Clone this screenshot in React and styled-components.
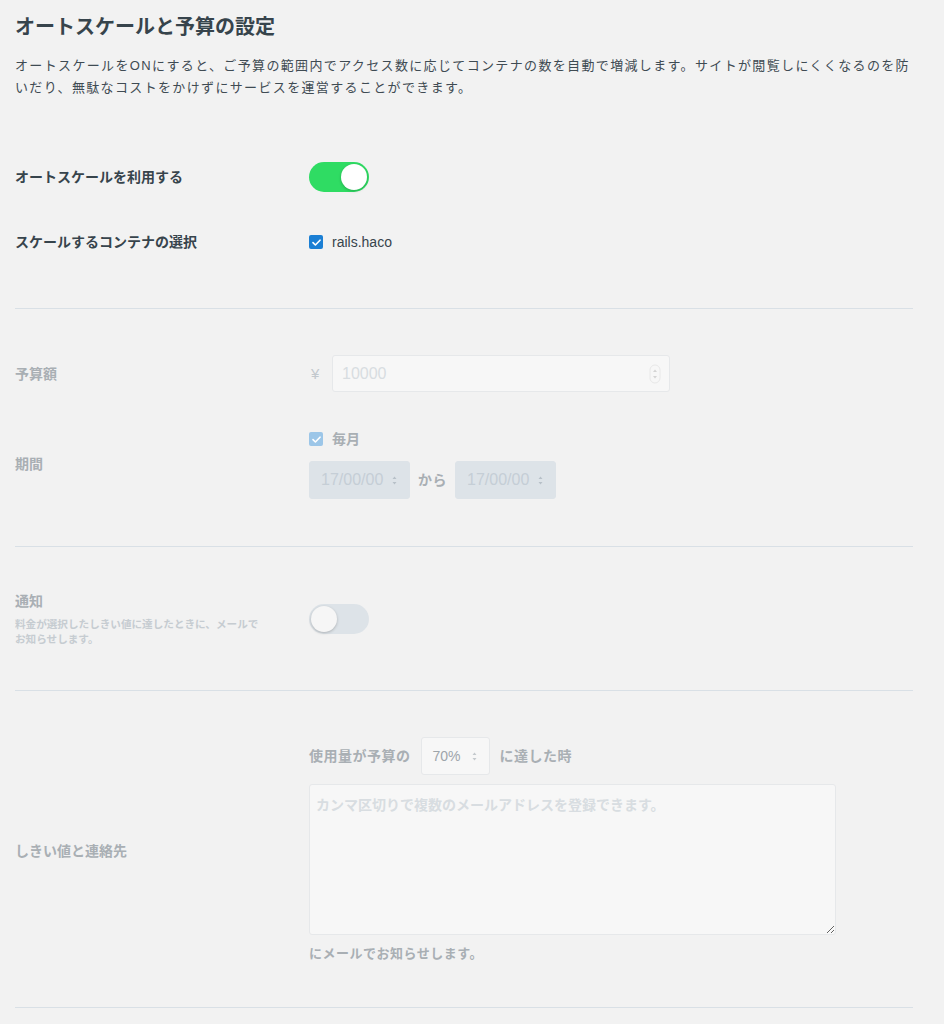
import React from "react";
import styled, { createGlobalStyle } from "styled-components";

const GlobalStyle = createGlobalStyle`
  html, body {
    margin: 0;
    padding: 0;
    background: #f2f2f2;
  }
  body {
    font-family: "Liberation Sans", "Noto Sans CJK JP", sans-serif;
    color: #37444c;
    -webkit-font-smoothing: antialiased;
  }
`;

const Page = styled.div`
  width: 898px;
  padding: 13px 31px 0 15px;
  background: #f2f2f2;
`;

const Title = styled.h1`
  margin: 0;
  font-size: 20px;
  line-height: 28px;
  font-weight: 700;
  color: #37444c;
`;

const Lead = styled.p`
  margin: 14px 0 0;
  font-size: 13px;
  line-height: 22px;
  letter-spacing: 1.35px;
  color: #3f4b53;
`;

const Section = styled.section`
  display: flex;
  flex-direction: column;
  gap: ${(p) => p.gap ?? 0}px;
  padding: ${(p) => p.top}px 0 ${(p) => p.bottom}px;
  border-bottom: 1px solid #d9e0e6;
`;

const Row = styled.div`
  display: grid;
  grid-template-columns: 294px 1fr;
  align-items: center;
`;

const Label = styled.div`
  font-size: 14px;
  line-height: 20px;
  font-weight: 600;
  color: ${(p) => (p.muted ? "#a9afb4" : "#37444c")};
`;

const Hint = styled.div`
  margin-top: 6px;
  max-width: 252px;
  font-size: 10.6px;
  line-height: 15px;
  font-weight: 600;
  color: #c6ccd1;
`;

const Control = styled.div`
  display: flex;
  flex-direction: column;
  align-items: flex-start;
  gap: ${(p) => p.gap ?? 0}px;
`;

const Inline = styled.div`
  display: flex;
  align-items: center;
  gap: ${(p) => p.gap ?? 8}px;
`;

const Track = styled.div`
  position: relative;
  width: 60px;
  height: 30px;
  border-radius: 15px;
  background: ${(p) => (p.on ? "#2fdc63" : "#dde3e8")};
`;

const Knob = styled.span`
  position: absolute;
  top: 2px;
  left: ${(p) => (p.on ? "32px" : "2px")};
  width: 26px;
  height: 26px;
  border-radius: 50%;
  background: ${(p) => (p.on ? "#ffffff" : "#f6f6f6")};
  box-shadow: 0 1px 3px rgba(0, 0, 0, 0.22);
`;

const Box = styled.span`
  display: inline-flex;
  align-items: center;
  justify-content: center;
  width: 14px;
  height: 14px;
  border-radius: 2px;
  background: ${(p) => (p.muted ? "#9cc6e8" : "#1b7fd4")};
`;

const CheckText = styled.span`
  font-size: 14px;
  line-height: 20px;
  font-weight: ${(p) => (p.muted ? 600 : 400)};
  color: ${(p) => (p.muted ? "#a9afb4" : "#37444c")};
`;

const Text = styled.span`
  font-size: ${(p) => p.size || 14}px;
  line-height: 20px;
  letter-spacing: 0.5px;
  font-weight: 600;
  color: #a9afb4;
`;

const Yen = styled.span`
  width: 23px;
  padding-left: 2px;
  box-sizing: border-box;
  font-size: 15px;
  color: #c2c8cd;
`;

const Field = styled.div`
  box-sizing: border-box;
  display: flex;
  align-items: center;
  justify-content: space-between;
  width: ${(p) => p.width}px;
  height: ${(p) => p.height}px;
  padding: 0 ${(p) => p.pr || 12}px 0 ${(p) => p.pl || 9}px;
  border-radius: 3px;
  border: 1px solid ${(p) => (p.tone === "dim" ? "#dde3e8" : "#e6e8ea")};
  background: ${(p) => (p.tone === "dim" ? "#dde3e8" : "#f7f7f7")};
  font-size: ${(p) => p.size || 14}px;
  color: ${(p) => p.color};
`;

const Notes = styled.textarea`
  box-sizing: border-box;
  width: 527px;
  height: 151px;
  margin: 0;
  padding: 9px 6px;
  border: 1px solid #e6e8ea;
  border-radius: 3px;
  background: #f7f7f7;
  font-family: "Noto Sans CJK JP", sans-serif;
  font-size: 14px;
  line-height: 20px;
  font-weight: 600;
  color: #37444c;
  outline: none;
  &::placeholder {
    color: #d8dde1;
  }
`;

const Check = ({ muted }) => (
  <Box muted={muted}>
    <svg width="9" height="7" viewBox="0 0 9 7">
      <path d="M1 3.6 L3.4 6 L8 1.2" fill="none" stroke="#fff" strokeWidth="1.6" strokeLinecap="round" strokeLinejoin="round" />
    </svg>
  </Box>
);

const Arrows = ({ color = "#b7c0c8" }) => (
  <svg width="5" height="9" viewBox="0 0 5 9">
    <path d="M2.5 0.5 L4.5 3 H0.5 Z M2.5 8.5 L4.5 6 H0.5 Z" fill={color} />
  </svg>
);

const Stepper = () => (
  <svg width="12" height="20" viewBox="0 0 12 20">
    <rect x="1" y="1" width="10" height="18" rx="5" fill="#f7f7f7" stroke="#e8e8e8" />
    <path d="M6 5.5 L8 8 H4 Z M6 14.5 L8 12 H4 Z" fill="#d4d4d4" />
  </svg>
);

const Toggle = ({ on }) => (
  <Track on={on}>
    <Knob on={on} />
  </Track>
);

export default function App() {
  return (
    <>
      <GlobalStyle />
      <Page>
        <Title>オートスケールと予算の設定</Title>
        <Lead>
          オートスケールをONにすると、ご予算の範囲内でアクセス数に応じてコンテナの数を自動で増減します。サイトが閲覧しにくくなるのを防
          <br />
          いだり、無駄なコストをかけずにサービスを運営することができます。
        </Lead>

        <Section top={63} bottom={56} gap={40}>
          <Row>
            <Label>オートスケールを利用する</Label>
            <Toggle on />
          </Row>
          <Row>
            <Label>スケールするコンテナの選択</Label>
            <Inline gap={9}>
              <Check />
              <CheckText>rails.haco</CheckText>
            </Inline>
          </Row>
        </Section>

        <Section top={46} bottom={47} gap={37}>
          <Row>
            <Label muted>予算額</Label>
            <Inline gap={0}>
              <Yen>¥</Yen>
              <Field width={338} height={37} tone="light" color="#d8dde1" pr={8} size={16}>
                <span>10000</span>
                <Stepper />
              </Field>
            </Inline>
          </Row>
          <Row>
            <Label muted>期間</Label>
            <Control gap={12}>
              <Inline gap={9}>
                <Check muted />
                <CheckText muted>毎月</CheckText>
              </Inline>
              <Inline gap={8}>
                <Field width={101} height={38} tone="dim" color="#c5ced6" pl={11} size={16}>
                  <span>17/00/00</span>
                  <Arrows />
                </Field>
                <Text>から</Text>
                <Field width={101} height={38} tone="dim" color="#c5ced6" pl={11} size={16}>
                  <span>17/00/00</span>
                  <Arrows />
                </Field>
              </Inline>
            </Control>
          </Row>
        </Section>

        <Section top={44} bottom={43}>
          <Row>
            <div>
              <Label muted>通知</Label>
              <Hint>料金が選択したしきい値に達したときに、メールでお知らせします。</Hint>
            </div>
            <Toggle />
          </Row>
        </Section>

        <Section top={46} bottom={43}>
          <Row>
            <Label muted>しきい値と連絡先</Label>
            <Control gap={9}>
              <Inline gap={10}>
                <Text>使用量が予算の</Text>
                <Field width={69} height={38} tone="light" color="#9ea5ab" pl={11}>
                  <span>70%</span>
                  <Arrows color="#c4c9cd" />
                </Field>
                <Text>に達した時</Text>
              </Inline>
              <Notes readOnly placeholder="カンマ区切りで複数のメールアドレスを登録できます。" />
              <Text size={13}>にメールでお知らせします。</Text>
            </Control>
          </Row>
        </Section>
      </Page>
    </>
  );
}
